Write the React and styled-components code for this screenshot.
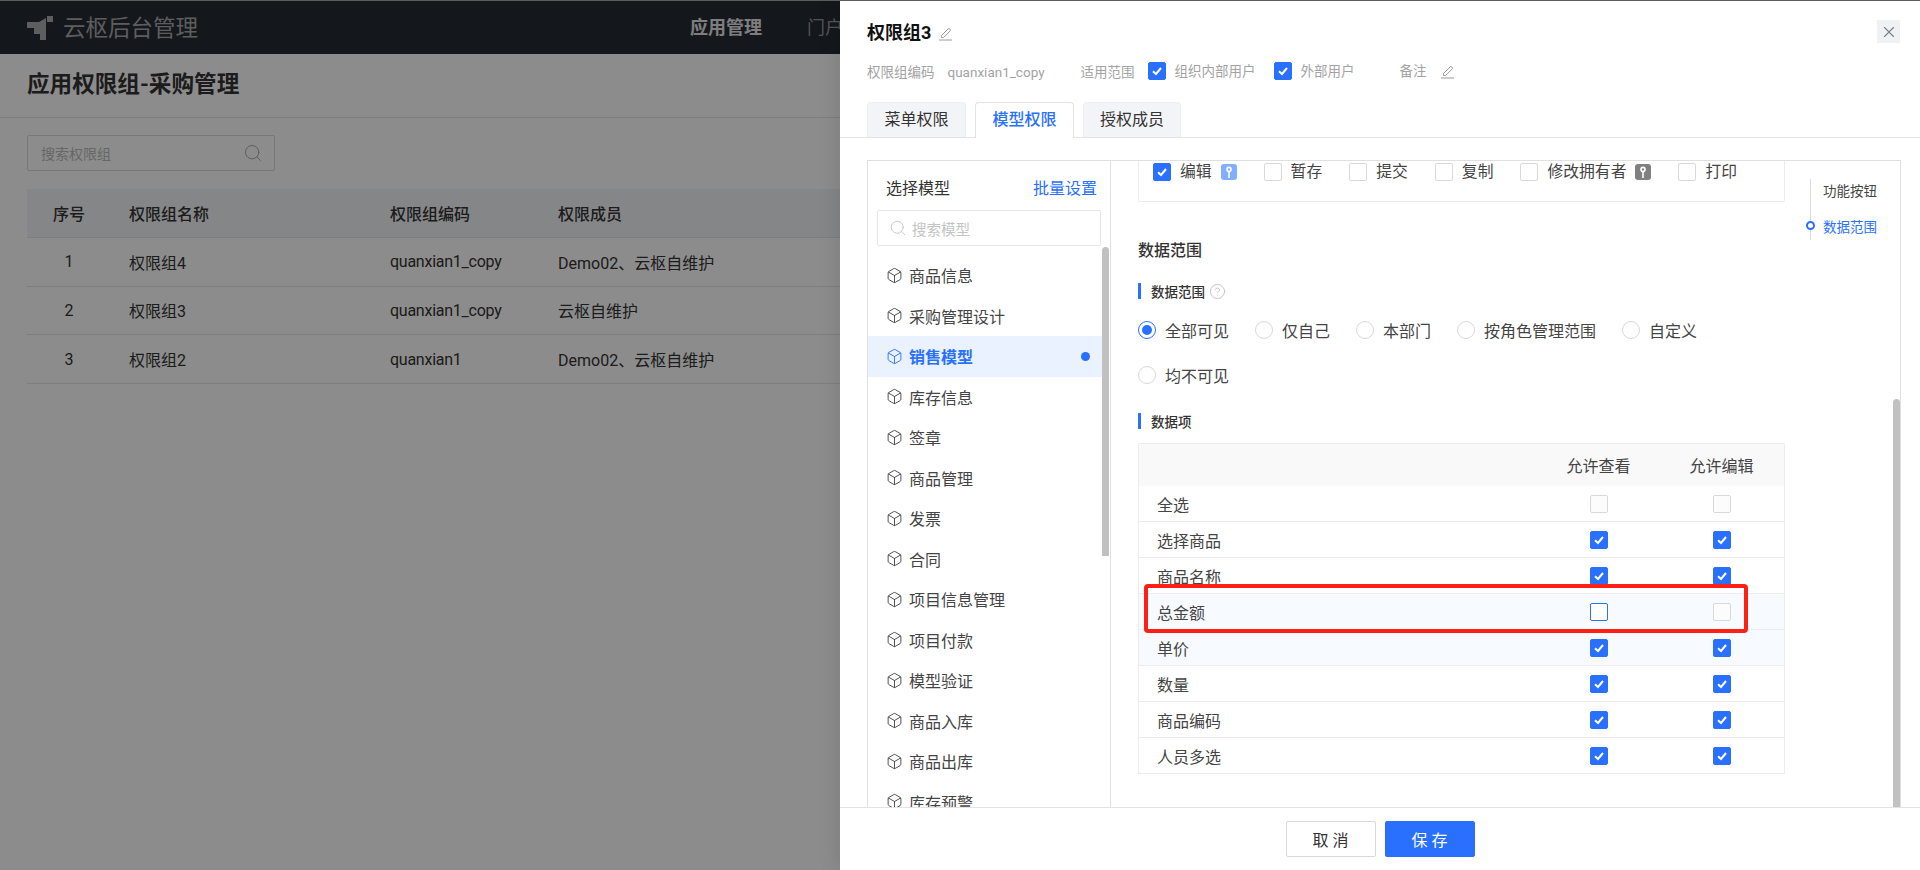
import React from 'react';
import styled, { createGlobalStyle } from 'styled-components';
import { Box, CircleHelp, Search, X } from 'lucide-react';

const GlobalStyle = createGlobalStyle`
	html, body {
		margin: 0;
		padding: 0;
		background: #fff;
	}
	body {
		font-family: Roboto, "Noto Sans CJK SC", sans-serif;
		color: #333;
	}
	* {
		box-sizing: border-box;
	}
`;

const BLUE = '#2970ff';

const Screen = styled.div`
	position: relative;
	width: 1920px;
	height: 870px;
	overflow: hidden;
	background: #fff;
	border-top: 1px solid #5c5c5c;
`;

const TopBar = styled.header`
	display: flex;
	align-items: center;
	height: 53px;
	padding-left: 27px;
	background: #262a33;
`;

const LogoText = styled.span`
	margin-left: 10px;
	width: 137px;
	font-size: 22.5px;
	line-height: 30px;
	white-space: nowrap;
	color: #aaa;
`;

const Nav = styled.nav`
	display: flex;
	gap: 45px;
	margin-left: 490px;
`;

const NavItem = styled.span`
	font-size: 18px;
	line-height: 26px;
	white-space: nowrap;
	font-weight: ${p => (p.$active ? 700 : 400)};
	color: ${p => (p.$active ? '#e6e6e6' : '#999')};
`;

const TitleBar = styled.div`
	display: flex;
	align-items: center;
	height: 64px;
	padding: 0 0 1px 27px;
	border-bottom: 1px solid #e6e6e6;
`;

const PageTitle = styled.h1`
	margin: 0;
	font-size: 22.6px;
	line-height: 30px;
	font-weight: 700;
	color: #333;
`;

const SearchRow = styled.div`
	padding: 17px 27px 18px;
`;

const PageSearch = styled.div`
	display: flex;
	align-items: center;
	justify-content: space-between;
	width: 248px;
	height: 36px;
	padding: 0 11px 0 13px;
	border: 1px solid #d9d9d9;
	border-radius: 2px;
	font-size: 14px;
	color: #bbb;
`;

const PageTable = styled.div`
	margin: 0 27px;
`;

const PageRow = styled.div`
	display: grid;
	grid-template-columns: 84px 261px 168px 1fr;
	align-items: center;
	height: ${p => (p.$head ? '49px' : '48.67px')};
	border-bottom: 1px solid #e6e6e6;
	background: ${p => (p.$head ? '#f3f4f6' : 'transparent')};
	font-size: 16px;
	color: #333;
	font-weight: ${p => (p.$head ? 500 : 400)};
`;

const PageCell = styled.span`
	padding-left: 18px;
	&:first-child {
		padding-left: 0;
		text-align: center;
	}
	&:nth-child(3) {
		letter-spacing: ${p => (p.$code ? '-0.25px' : 0)};
	}
`;

const Mask = styled.div`
	position: absolute;
	inset: 0;
	background: rgba(0, 0, 0, 0.45);
`;

const Drawer = styled.aside`
	position: absolute;
	top: 0;
	right: 0;
	bottom: 0;
	width: 1080px;
	display: flex;
	flex-direction: column;
	background: #fff;
	box-shadow: -6px 0 16px rgba(0, 0, 0, 0.08);
`;

const DrawerHead = styled.div`
	padding-top: 19px;
	border-bottom: 1px solid #e3e3e3;
`;

const TitleRow = styled.div`
	display: flex;
	align-items: center;
	gap: 7px;
	height: 26px;
	padding-left: 27px;
`;

const DrawerTitle = styled.h2`
	margin: 0;
	font-size: 18px;
	line-height: 26px;
	font-weight: 700;
	color: #111;
`;

const CloseButton = styled.button`
	position: absolute;
	top: 19px;
	right: 20px;
	display: flex;
	align-items: center;
	justify-content: center;
	width: 23px;
	height: 23px;
	padding: 0;
	border: 0;
	background: #f0f1f5;
	color: #7a7f8c;
`;

const MetaRow = styled.div`
	display: flex;
	align-items: center;
	height: 20px;
	margin-top: 15px;
	padding-left: 27px;
	font-size: 13.5px;
	line-height: 20px;
	color: #a3a3a3;
`;

const MetaLabel = styled.span`
	margin-left: ${p => p.$left || 0}px;
	padding-top: ${p => (p.$low ? 2 : 0)}px;
	white-space: nowrap;
`;

const MetaChoice = styled.label`
	display: flex;
	align-items: center;
	gap: 9px;
	margin-left: ${p => p.$left}px;
	white-space: nowrap;
`;

const MetaEdit = styled.span`
	display: flex;
	margin-left: 13px;
`;

const Tabs = styled.div`
	display: flex;
	gap: 9px;
	height: 35px;
	margin-top: 21px;
	padding-left: 27px;
`;

const Tab = styled.div`
	width: ${p => p.$width}px;
	height: ${p => (p.$active ? 36 : 35)}px;
	border: 1px solid ${p => (p.$active ? '#e3e3e3' : '#eceef2')};
	border-bottom: 0;
	border-radius: 4px 4px 0 0;
	background: ${p => (p.$active ? '#fff' : '#f3f4f7')};
	color: ${p => (p.$active ? BLUE : '#333')};
	font-size: 16px;
	font-weight: ${p => (p.$active ? 500 : 400)};
	line-height: 34px;
	text-align: center;
`;

const DrawerBody = styled.div`
	flex: 1;
	min-height: 0;
	padding: 22px 19px 0 27px;
`;

const Frame = styled.div`
	display: flex;
	height: 100%;
	border: 1px solid #e0e0e0;
	border-bottom: 0;
`;

const ModelPanel = styled.div`
	position: relative;
	flex: 0 0 243px;
	display: flex;
	flex-direction: column;
	overflow: hidden;
	border-right: 1px solid #e0e0e0;
`;

const PanelHead = styled.div`
	flex: none;
	display: flex;
	justify-content: space-between;
	align-items: center;
	height: 24px;
	margin-top: 16px;
	padding: 0 13px 0 18px;
	font-size: 16px;
	line-height: 24px;
`;

const BatchLink = styled.span`
	color: ${BLUE};
`;

const ModelSearch = styled.div`
	flex: none;
	display: flex;
	align-items: center;
	gap: 5px;
	width: 224px;
	height: 36px;
	margin: 9px 0 0 9px;
	padding-left: 11px;
	border: 1px solid #e6e6e6;
	border-radius: 2px;
	font-size: 14.5px;
	color: #c4c4c4;
`;

const ModelList = styled.ul`
	flex: none;
	margin: 9px 7px 0 0;
	padding: 0;
	list-style: none;
`;

const ModelItem = styled.li`
	display: flex;
	align-items: center;
	gap: 6px;
	height: 40.5px;
	padding: 0 13px 0 18px;
	font-size: 16px;
	white-space: nowrap;
	color: ${p => (p.$active ? BLUE : '#444')};
	font-weight: ${p => (p.$active ? 700 : 400)};
	background: ${p => (p.$active ? '#ebf2ff' : 'transparent')};
`;

const ActiveDot = styled.i`
	width: 9px;
	height: 9px;
	margin-left: auto;
	border-radius: 50%;
	background: ${BLUE};
`;

const Thumb = styled.div`
	position: absolute;
	right: 1px;
	top: ${p => p.$top}px;
	width: 7px;
	height: ${p => p.$height}px;
	border-radius: 4px 4px 0 0;
	background: #c1c1c1;
`;

const Detail = styled.div`
	position: relative;
	flex: 1;
	display: flex;
	padding-left: 27px;
	overflow: hidden;
`;

const DetailColumn = styled.div`
	flex: 0 0 647px;
`;

const ActionBox = styled.div`
	display: flex;
	gap: 27px;
	height: 41px;
	padding: 1px 0 0 14px;
	border: 1px solid #ececec;
	border-top: 0;
	border-radius: 0 0 2px 2px;
`;

const Choice = styled.label`
	display: flex;
	align-items: center;
	gap: 9px;
	height: 20px;
	font-size: 15.8px;
	line-height: 20px;
	white-space: nowrap;
	color: #444;
`;

const CheckFace = styled.span`
	display: inline-flex;
	align-items: center;
	justify-content: center;
	flex: none;
	width: 18px;
	height: 18px;
	border-radius: 2px;
	border: 1px solid ${p => (p.$on || p.$focus ? BLUE : '#d9d9d9')};
	background: ${p => (p.$on ? BLUE : p.$muted ? '#fcfcfc' : '#fff')};
`;

const KeyBadge = styled.span`
	display: inline-flex;
	align-items: center;
	justify-content: center;
	width: 16px;
	height: 16px;
	border-radius: 3px;
	background: ${p => (p.$grey ? '#808080' : '#7fb0ff')};
`;

const Heading = styled.h3`
	margin: 37px 0 0;
	font-size: 16px;
	line-height: 24px;
	font-weight: 500;
	color: #333;
`;

const SubHead = styled.div`
	display: flex;
	align-items: center;
	gap: 4px;
	height: 16px;
	margin-top: ${p => p.$top}px;
	padding-left: 10px;
	border-left: 3px solid ${BLUE};
	font-size: 13.5px;
	font-weight: 500;
	color: #333;
`;

const RadioRow = styled.div`
	display: flex;
	flex-wrap: wrap;
	gap: 21px 26px;
	margin-top: 19px;
`;

const RadioItem = styled.label`
	display: flex;
	align-items: center;
	gap: 9px;
	height: 24px;
	font-size: 16px;
	white-space: nowrap;
	color: #444;
`;

const RadioFace = styled.span`
	position: relative;
	flex: none;
	width: 18px;
	height: 18px;
	border-radius: 50%;
	border: 1px solid ${p => (p.$on ? BLUE : '#d9d9d9')};
	&::after {
		content: ${p => (p.$on ? '""' : 'none')};
		position: absolute;
		inset: 3px;
		border-radius: 50%;
		background: ${BLUE};
	}
`;

const Grid = styled.div`
	position: relative;
	margin-top: 14px;
	border: 1px solid #ececec;
	border-bottom: 0;
	border-radius: 2px 2px 0 0;
`;

const GridRow = styled.div`
	display: grid;
	grid-template-columns: 1fr 123px 123px;
	align-items: center;
	height: ${p => (p.$head ? 42 : 36)}px;
	padding: 0 1px 0 18px;
	font-size: 16px;
	color: #444;
	border-bottom: ${p => (p.$head ? '0' : '1px solid #ececec')};
	background: ${p => (p.$head ? '#f9f9f9' : p.$hover ? '#f7faff' : '#fff')};
`;

const GridCell = styled.div`
	display: flex;
	justify-content: center;
`;

const Callout = styled.div`
	position: absolute;
	left: 5px;
	top: 140px;
	width: 604px;
	height: 49px;
	border: 4px solid #ff2015;
	border-radius: 4px;
	pointer-events: none;
`;

const Rail = styled.nav`
	position: relative;
	align-self: flex-start;
	margin: 18px 0 0 25px;
	height: 61px;
	padding-left: 12px;
	border-left: 1px solid #dcdcdc;
`;

const RailItem = styled.div`
	height: 24px;
	margin-bottom: 12px;
	font-size: 13.5px;
	line-height: 24px;
	white-space: nowrap;
	color: ${p => (p.$active ? BLUE : '#444')};
`;

const RailDot = styled.i`
	position: absolute;
	left: -5px;
	top: 42px;
	width: 9px;
	height: 9px;
	border-radius: 50%;
	border: 2px solid ${BLUE};
	background: #fff;
`;

const DetailThumb = styled.div`
	position: absolute;
	right: 0;
	top: 238px;
	bottom: 0;
	width: 7px;
	border-radius: 4px 4px 0 0;
	background: #c1c1c1;
`;

const Footer = styled.footer`
	flex: none;
	display: flex;
	justify-content: center;
	gap: 9px;
	height: 63px;
	padding-top: 13px;
	border-top: 1px solid #e3e3e3;
`;

const FooterButton = styled.button`
	width: 90px;
	height: 36px;
	padding: 0;
	border: 1px solid ${p => (p.$primary ? BLUE : '#d9d9d9')};
	border-radius: 2px;
	background: ${p => (p.$primary ? BLUE : '#fff')};
	color: ${p => (p.$primary ? '#fff' : '#333')};
	font-family: inherit;
	font-size: 16px;
	letter-spacing: 4px;
	text-indent: 4px;
`;

const Logo = () => (
	<svg width="26" height="24" viewBox="0 0 26 24" fill="#ababab">
		<polygon points="0,6 12,6 19,2 19,24 13,24 13,18 7,18 7,12 0,12" />
		<rect x="20" y="0" width="6" height="6" />
	</svg>
);

const Pencil = () => (
	<svg width="15" height="15" viewBox="0 0 15 15" fill="none" stroke="#9a9a9a" strokeWidth="1">
		<path d="M3.5 9.5 10 3a1.2 1.2 0 0 1 1.8 0l.3.3a1.2 1.2 0 0 1 0 1.7L5.6 11.5H3.5z" />
		<path d="M1 14h13" />
	</svg>
);

const Tick = () => (
	<svg width="12" height="12" viewBox="0 0 12 12" fill="none" stroke="#fff" strokeWidth="2">
		<path d="M2 6.2 5 9l5-6" />
	</svg>
);

const Key = () => (
	<svg width="8" height="13" viewBox="0 0 8 13" fill="none" stroke="#fff" strokeWidth="1.6">
		<circle cx="4" cy="3.4" r="2" />
		<path d="M4 5.5V12" />
	</svg>
);

const Check = ({ on, muted, focus }) => (
	<CheckFace $on={on} $muted={muted} $focus={focus}>
		{on && <Tick />}
	</CheckFace>
);

const pageRows = [
	['1', '权限组4', 'quanxian1_copy', 'Demo02、云枢自维护'],
	['2', '权限组3', 'quanxian1_copy', '云枢自维护'],
	['3', '权限组2', 'quanxian1', 'Demo02、云枢自维护'],
];

const models = [
	'商品信息', '采购管理设计', '销售模型', '库存信息', '签章', '商品管理', '发票',
	'合同', '项目信息管理', '项目付款', '模型验证', '商品入库', '商品出库', '库存预警',
];

const scopes = ['全部可见', '仅自己', '本部门', '按角色管理范围', '自定义', '均不可见'];

const fields = [
	{ name: '全选', muted: true },
	{ name: '选择商品', on: true },
	{ name: '商品名称', on: true },
	{ name: '总金额', hover: true },
	{ name: '单价', on: true, hover: true },
	{ name: '数量', on: true },
	{ name: '商品编码', on: true },
	{ name: '人员多选', on: true },
];

export default function App() {
	return (
		<Screen>
			<GlobalStyle />
			<TopBar>
				<Logo />
				<LogoText>云枢后台管理</LogoText>
				<Nav>
					<NavItem $active>应用管理</NavItem>
					<NavItem>门户管理</NavItem>
				</Nav>
			</TopBar>
			<TitleBar>
				<PageTitle>应用权限组-采购管理</PageTitle>
			</TitleBar>
			<SearchRow>
				<PageSearch>
					搜索权限组
					<Search size={20} strokeWidth={1.2} color="#aaa" />
				</PageSearch>
			</SearchRow>
			<PageTable>
				<PageRow $head>
					<PageCell>序号</PageCell>
					<PageCell>权限组名称</PageCell>
					<PageCell>权限组编码</PageCell>
					<PageCell>权限成员</PageCell>
				</PageRow>
				{pageRows.map(row => (
					<PageRow key={row[0]}>
						{row.map(text => (
							<PageCell key={text} $code>{text}</PageCell>
						))}
					</PageRow>
				))}
			</PageTable>
			<Mask />
			<Drawer>
				<DrawerHead>
					<TitleRow>
						<DrawerTitle>权限组3</DrawerTitle>
						<Pencil />
					</TitleRow>
					<MetaRow>
						<MetaLabel $low>权限组编码</MetaLabel>
						<MetaLabel $low $left={13}>quanxian1_copy</MetaLabel>
						<MetaLabel $low $left={36}>适用范围</MetaLabel>
						<MetaChoice $left={13}>
							<Check on />
							组织内部用户
						</MetaChoice>
						<MetaChoice $left={18}>
							<Check on />
							外部用户
						</MetaChoice>
						<MetaLabel $left={45}>备注</MetaLabel>
						<MetaEdit>
							<Pencil />
						</MetaEdit>
					</MetaRow>
					<Tabs>
						<Tab $width={99}>菜单权限</Tab>
						<Tab $width={99} $active>模型权限</Tab>
						<Tab $width={98}>授权成员</Tab>
					</Tabs>
				</DrawerHead>
				<DrawerBody>
					<Frame>
						<ModelPanel>
							<PanelHead>
								<span>选择模型</span>
								<BatchLink>批量设置</BatchLink>
							</PanelHead>
							<ModelSearch>
								<Search size={18} strokeWidth={1.2} color="#c4c4c4" />
								搜索模型
							</ModelSearch>
							<ModelList>
								{models.map(name => (
									<ModelItem key={name} $active={name === '销售模型'}>
										<Box size={17} strokeWidth={1.3} />
										{name}
										{name === '销售模型' && <ActiveDot />}
									</ModelItem>
								))}
							</ModelList>
							<Thumb $top={86} $height={309} />
						</ModelPanel>
						<Detail>
							<DetailColumn>
								<ActionBox>
									<Choice>
										<Check on />
										编辑
										<KeyBadge>
											<Key />
										</KeyBadge>
									</Choice>
									<Choice><Check />暂存</Choice>
									<Choice><Check />提交</Choice>
									<Choice><Check />复制</Choice>
									<Choice>
										<Check />
										修改拥有者
										<KeyBadge $grey>
											<Key />
										</KeyBadge>
									</Choice>
									<Choice><Check />打印</Choice>
								</ActionBox>
								<Heading>数据范围</Heading>
								<SubHead $top={20}>
									数据范围
									<CircleHelp size={17} strokeWidth={1.1} color="#b5b5b5" />
								</SubHead>
								<RadioRow>
									{scopes.map((name, i) => (
										<RadioItem key={name}>
											<RadioFace $on={i === 0} />
											{name}
										</RadioItem>
									))}
								</RadioRow>
								<SubHead $top={26}>数据项</SubHead>
								<Grid>
									<GridRow $head>
										<span />
										<GridCell>允许查看</GridCell>
										<GridCell>允许编辑</GridCell>
									</GridRow>
									{fields.map(field => (
										<GridRow key={field.name} $hover={field.hover}>
											<span>{field.name}</span>
											<GridCell>
												<Check on={field.on} muted={field.muted} focus={field.name === '总金额'} />
											</GridCell>
											<GridCell>
												<Check on={field.on} muted={!field.on} />
											</GridCell>
										</GridRow>
									))}
									<Callout />
								</Grid>
							</DetailColumn>
							<Rail>
								<RailItem>功能按钮</RailItem>
								<RailItem $active>数据范围</RailItem>
								<RailDot />
							</Rail>
							<DetailThumb />
						</Detail>
					</Frame>
				</DrawerBody>
				<Footer>
					<FooterButton>取消</FooterButton>
					<FooterButton $primary>保存</FooterButton>
				</Footer>
				<CloseButton>
					<X size={18} strokeWidth={1.5} />
				</CloseButton>
			</Drawer>
		</Screen>
	);
}
